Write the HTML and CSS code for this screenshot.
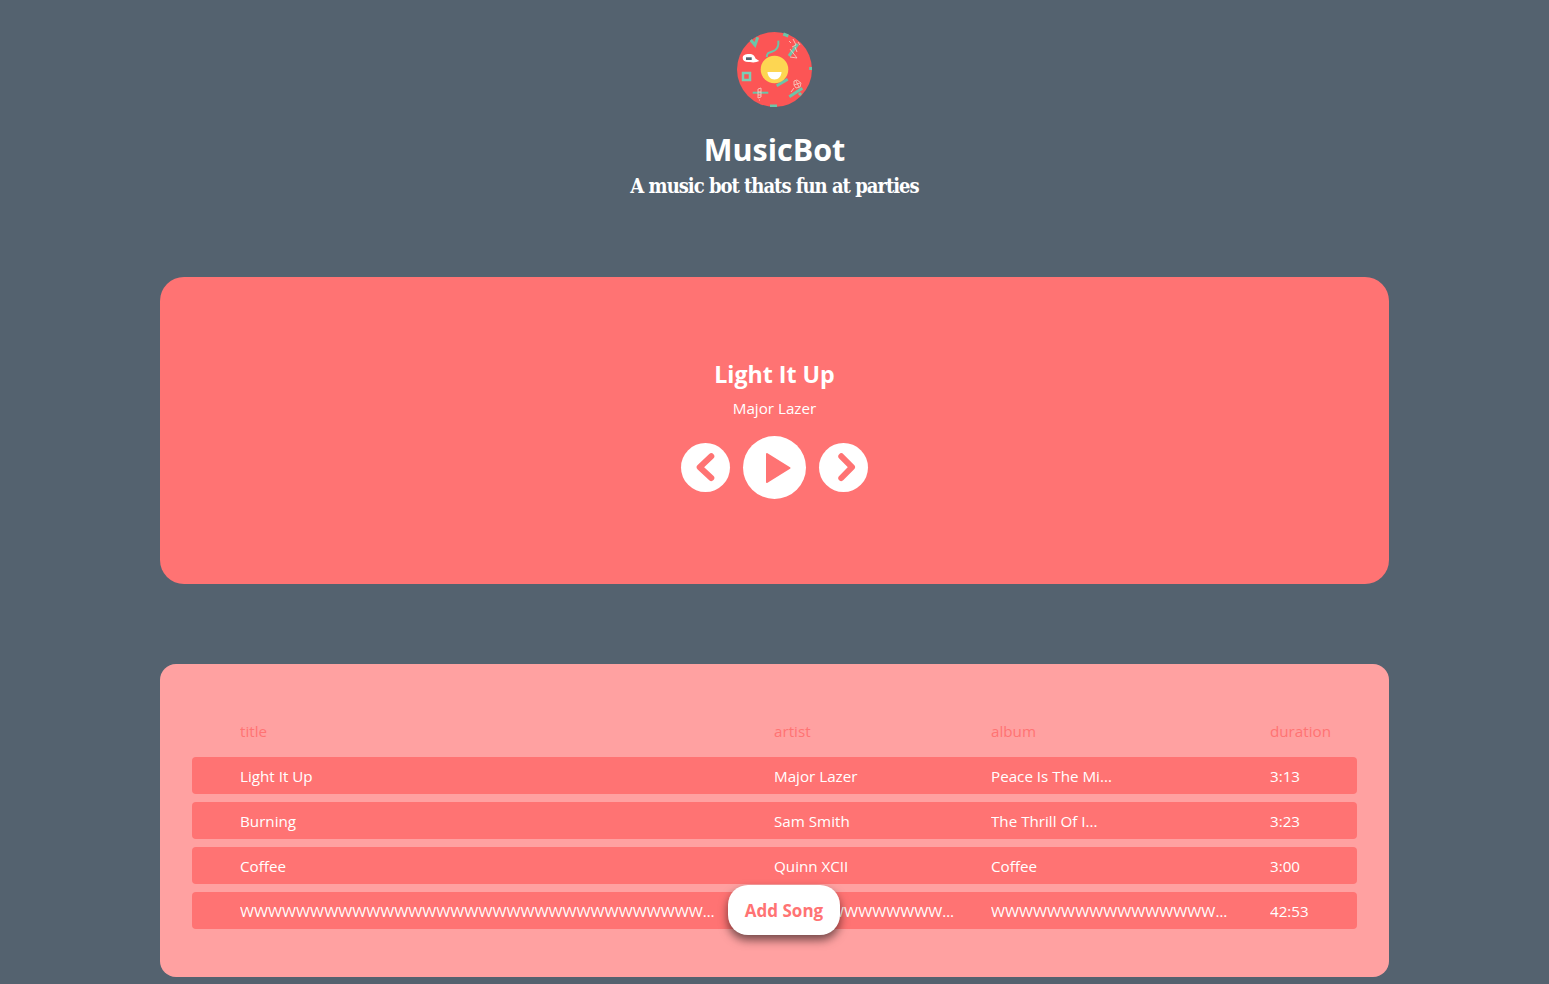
FILE: index.html
```html
<!DOCTYPE html>
<html lang="en">
<head>
    <meta charset="UTF-8">
    <meta name="viewport" content="width=device-width, initial-scale=1.0">
    <title>MusicBot</title>
    <link rel="stylesheet" href="styles.css">
</head>
<body>
    <header class="header">
        <svg class="logo" viewBox="0 0 75 75" width="75" height="75" aria-hidden="true">
            <circle cx="37.5" cy="37.5" r="37.5" fill="#fc5555"/>
            <g fill="none" stroke="#6cc5a8" stroke-width="3">
                <path d="M13.7 8l4.300 5 2.700-7.700"/>
                <path d="M60.700 12L52 24"/>
                <path d="M39.700 53.700l11-6.400"/>
                <path d="M65.300 56.300L52.300 64.700"/>
                <path d="M46.300 2l5 2M62 63l2-2M73.700 35v3M33 74h7"/>
                <path d="M41.300 8.700c.5 5-.5 7.500-3 9.300-3 2-6.500 2.500-7.500 3.500-.8 1-1 2.500-1 3.500" stroke-width="2"/>
                <path d="M15.700 60.700h15.600" stroke-width="2"/>
                <rect x="6" y="41" width="7" height="7" stroke="#7ccdb4" stroke-width="2.500"/>
            </g>
            <path d="M5.700 26c0-3 2.500-4 6.500-4s5.500 2 6.300 4.500l3.800 2.500c-3 1.500-6.500 1.700-9.300 1-4.500.5-7.300-1-7.300-4z" fill="#fff"/>
            <rect x="9" y="25.300" width="5.700" height="2.700" fill="#54626f"/>
            <circle cx="37.5" cy="37.5" r="13.800" fill="#fdd652"/>
            <path d="M30.500 40h14c0 4-3 7.500-7 7.500s-7-3.500-7-7.500z" fill="#fff"/>
            <g fill="none" stroke="#f6d5c9" stroke-width="0.800">
                <path d="M52 9l2 2M56 7l3 6-4 2M53 17l7 9-7-1M58 15l2 5M61 10l2 3"/>
                <path d="M57 49l3-1 4 3-1 4-4 1-2-3zM59 49l3 6M57 53l6-2M54 60l3-4"/>
                <path d="M21 57l3-1v9l-3 1zM21 60h3M21 63h3M22 68h1"/>
            </g>
        </svg>
        <h1 class="brand">MusicBot</h1>
        <p class="tagline">A music bot thats fun at parties</p>
    </header>

    <section class="player">
        <h2 class="track-title">Light It Up</h2>
        <p class="track-artist">Major Lazer</p>
        <div class="controls">
            <button class="ctrl" type="button" aria-label="Previous">
                <svg viewBox="0 0 49 49" width="49" height="49"><path d="M30.300 13.300L18.700 24.200 30.300 35" fill="none" stroke="#ff7373" stroke-width="6" stroke-linecap="round" stroke-linejoin="round"/></svg>
            </button>
            <button class="ctrl ctrl-play" type="button" aria-label="Play">
                <svg viewBox="0 0 63 63" width="63" height="63"><path d="M24 18l22.500 14L24 46z" fill="#ff7373" stroke="#ff7373" stroke-width="2" stroke-linejoin="round"/></svg>
            </button>
            <button class="ctrl" type="button" aria-label="Next">
                <svg viewBox="0 0 49 49" width="49" height="49"><path d="M22.300 13.300L33 24.200 22.300 35" fill="none" stroke="#ff7373" stroke-width="6" stroke-linecap="round" stroke-linejoin="round"/></svg>
            </button>
        </div>
    </section>

    <section class="queue">
        <div class="row row-head">
            <span class="cell">title</span>
            <span class="cell">artist</span>
            <span class="cell">album</span>
            <span class="cell">duration</span>
        </div>
        <div class="row">
            <span class="cell">Light It Up</span>
            <span class="cell">Major Lazer</span>
            <span class="cell">Peace Is The Mi...</span>
            <span class="cell">3:13</span>
        </div>
        <div class="row">
            <span class="cell">Burning</span>
            <span class="cell">Sam Smith</span>
            <span class="cell">The Thrill Of I...</span>
            <span class="cell">3:23</span>
        </div>
        <div class="row">
            <span class="cell">Coffee</span>
            <span class="cell">Quinn XCII</span>
            <span class="cell">Coffee</span>
            <span class="cell">3:00</span>
        </div>
        <div class="row">
            <span class="cell">WWWWWWWWWWWWWWWWWWWWWWWWWWWWWWWWWWWWWWWWWWWWWWWWWWWWWWWW</span>
            <span class="cell">WWWWWWWWWWWWWWWWWWWWWWWWWWW</span>
            <span class="cell">WWWWWWWWWWWWWWWWWWWWWWWWWWW</span>
            <span class="cell">42:53</span>
        </div>
        <button class="add-song" type="button">Add Song</button>
    </section>
</body>
</html>
```

FILE: styles.css
```css
body {
    margin: 0;
    min-height: 984px;
    padding: 32px 160px 7px;
    box-sizing: border-box;
    background-color: #54626f;
    color: white;
    font-family: "Open Sans", "Noto Sans", sans-serif;
}
.header {
    display: flex;
    flex-direction: column;
    align-items: center;
    height: 245px;
}
.logo {
    display: block;
}
.brand {
    margin: 22px 0 0;
    font-size: 30.5px;
    line-height: 40px;
    font-weight: 700;
}
.tagline {
    margin: 2px 0 0;
    font-family: "DejaVu Serif", serif;
    font-stretch: condensed;
    font-size: 20px;
    line-height: 30px;
    font-weight: 700;
    letter-spacing: -1px;
}
.player {
    display: flex;
    flex-direction: column;
    align-items: center;
    box-sizing: border-box;
    height: 307px;
    padding-top: 81px;
    margin-bottom: 80px;
    background-color: #ff7373;
    border-radius: 24px;
}
.track-title {
    margin: 0;
    font-size: 23.2px;
    line-height: 32px;
    font-weight: 700;
}
.track-artist {
    margin: 7px 0 0;
    font-size: 15.2px;
    line-height: 22px;
}
.controls {
    display: flex;
    align-items: center;
    gap: 13px;
    margin-top: 17px;
}
.ctrl {
    width: 49px;
    height: 49px;
    padding: 0;
    border: none;
    border-radius: 50%;
    background-color: white;
    cursor: pointer;
}
.ctrl svg {
    display: block;
}
.ctrl-play {
    width: 63px;
    height: 63px;
}
.queue {
    position: relative;
    box-sizing: border-box;
    height: 313px;
    padding: 48px 32px 0;
    background-color: #ffa1a1;
    border-radius: 16px;
}
.row {
    display: grid;
    grid-template-columns: 534px 217px 279px 87px;
    align-items: center;
    height: 37px;
    padding-left: 48px;
    margin-bottom: 8px;
    background-color: #ff7373;
    border-radius: 4px;
    font-size: 15.2px;
}
.row-head {
    background-color: transparent;
    color: #ff7373;
}
.cell {
    overflow: hidden;
    white-space: nowrap;
    text-overflow: ellipsis;
    padding-right: 32px;
}
.cell:nth-child(1) {
    padding-right: 56px;
}
.cell:nth-child(2) {
    padding-right: 36px;
}
.cell:nth-child(4) {
    padding-right: 0;
}
.add-song {
    position: absolute;
    left: 568px;
    top: 221px;
    width: 112px;
    height: 50px;
    padding: 1px 0 0;
    border: none;
    border-radius: 20px;
    background-color: white;
    color: #ff7373;
    font-family: inherit;
    font-size: 17px;
    font-weight: 700;
    box-shadow: 0 5px 10px rgba(0, 0, 0, 0.55);
    cursor: pointer;
}
```
